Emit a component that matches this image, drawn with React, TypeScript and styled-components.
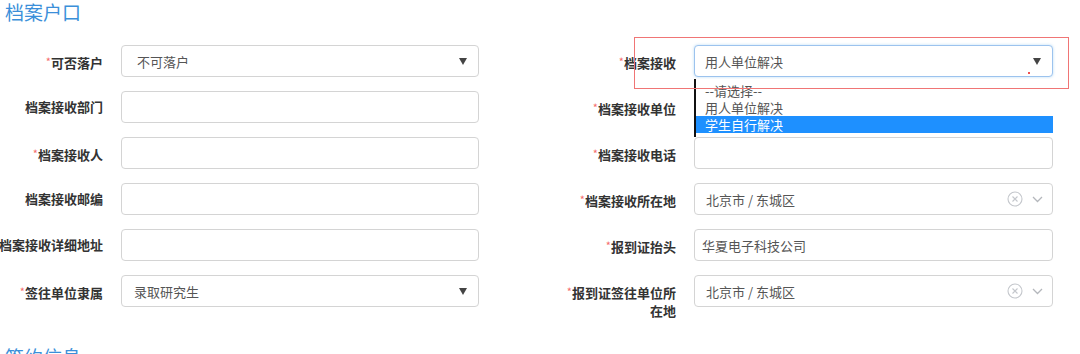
import React from "react";
import styled, { createGlobalStyle } from "styled-components";

const GlobalStyle = createGlobalStyle`
  html, body { margin: 0; padding: 0; background: #fff; overflow: hidden; }
  body { font-family: "Noto Sans CJK SC", "Noto Sans", sans-serif; }
`;

const Page = styled.div`
  width: 1080px;
  height: 354px;
  overflow: hidden;
`;

const SectionTitle = styled.div<{ $top?: number }>`
  font-size: 19px;
  line-height: 24px;
  height: 24px;
  color: #3b8fd9;
  padding-left: 5px;
  margin-top: ${(p) => p.$top ?? 0}px;
`;

const FormGrid = styled.div`
  display: grid;
  grid-template-columns: 487px 488px;
  column-gap: 86px;
  row-gap: 14px;
  margin-left: -8px;
  margin-top: 21px;
`;

const Field = styled.div`
  position: relative;
  display: grid;
  grid-template-columns: 111px 1fr;
  column-gap: 18px;
  align-items: start;
`;

const Label = styled.label`
  font-size: 13px;
  line-height: 18px;
  padding-top: 7px;
  font-weight: 700;
  color: #333;
  text-align: right;
`;

const Star = styled.span`
  color: #f56c6c;
  font-size: 11px;
  font-weight: 400;
  vertical-align: 2px;
`;

const Control = styled.div<{ $focus?: boolean; $pad?: number }>`
  position: relative;
  box-sizing: border-box;
  height: 32px;
  border: 1px solid ${(p) => (p.$focus ? "#9cc3ee" : "#d4d4d4")};
  box-shadow: ${(p) => (p.$focus ? "0 0 3px rgba(102,175,233,0.45)" : "none")};
  border-radius: 4px;
  display: flex;
  align-items: center;
  padding: 0 11px 0 ${(p) => p.$pad ?? 10}px;
  font-size: 13px;
  color: #555;
  background: #fff;
`;

const Value = styled.span`
  flex: 1;
  white-space: nowrap;
`;

const Icons = styled.span`
  display: flex;
  align-items: center;
  gap: 9px;
  margin-right: -2px;
`;

const Dropdown = styled.ul`
  position: absolute;
  top: 33px;
  left: -1px;
  width: 357px;
  margin: 0;
  padding: 3px 0 4px;
  list-style: none;
  background: #fff;
  border-left: 2px solid #111;
  z-index: 2;
`;

const Option = styled.li<{ $active?: boolean }>`
  height: 17px;
  line-height: 17px;
  padding-left: 9px;
  font-size: 13px;
  color: ${(p) => (p.$active ? "#fff" : "#555")};
  background: ${(p) => (p.$active ? "#1e90ff" : "transparent")};
`;

const Highlight = styled.div`
  position: absolute;
  left: 69px;
  top: -8px;
  width: 435px;
  height: 52px;
  box-sizing: border-box;
  border: 1px solid #f07575;
  pointer-events: none;
  z-index: 3;
`;

const Dot = styled.span`
  position: absolute;
  right: 22px;
  bottom: 2px;
  width: 2px;
  height: 2px;
  background: #f05050;
`;

const Caret = () => (
  <svg width="8" height="7" viewBox="0 0 8 7">
    <polygon points="0,0 8,0 4,7" fill="#444" />
  </svg>
);

const ClearIcon = () => (
  <svg width="16" height="16" viewBox="0 0 16 16">
    <circle cx="8" cy="8" r="7" fill="none" stroke="#c4c7cc" strokeWidth="1.1" />
    <path d="M5.5 5.5 L10.5 10.5 M10.5 5.5 L5.5 10.5" stroke="#c4c7cc" strokeWidth="1.1" />
  </svg>
);

const Chevron = () => (
  <svg width="11" height="7" viewBox="0 0 11 7">
    <polyline points="1,1 5.5,5.5 10,1" fill="none" stroke="#b4b7bc" strokeWidth="1.3" />
  </svg>
);

type Req = { req?: boolean; children: React.ReactNode };
const FieldLabel = ({ req, children }: Req) => (
  <Label>
    {req && <Star>*</Star>}
    {children}
  </Label>
);

export default function App() {
  return (
    <Page>
      <GlobalStyle />
      <SectionTitle>档案户口</SectionTitle>
      <FormGrid>
        <Field>
          <FieldLabel req>可否落户</FieldLabel>
          <Control $pad={15}>
            <Value>不可落户</Value>
            <Caret />
          </Control>
        </Field>
        <Field>
          <FieldLabel req>档案接收</FieldLabel>
          <Control $focus>
            <Value>用人单位解决</Value>
            <Caret />
            <Dot />
            <Dropdown>
              <Option>--请选择--</Option>
              <Option>用人单位解决</Option>
              <Option $active>学生自行解决</Option>
            </Dropdown>
          </Control>
          <Highlight />
        </Field>

        <Field>
          <FieldLabel>档案接收部门</FieldLabel>
          <Control />
        </Field>
        <Field>
          <FieldLabel req>档案接收单位</FieldLabel>
          <Control />
        </Field>

        <Field>
          <FieldLabel req>档案接收人</FieldLabel>
          <Control />
        </Field>
        <Field>
          <FieldLabel req>档案接收电话</FieldLabel>
          <Control />
        </Field>

        <Field>
          <FieldLabel>档案接收邮编</FieldLabel>
          <Control />
        </Field>
        <Field>
          <FieldLabel req>档案接收所在地</FieldLabel>
          <Control $pad={11}>
            <Value>北京市 / 东城区</Value>
            <Icons>
              <ClearIcon />
              <Chevron />
            </Icons>
          </Control>
        </Field>

        <Field>
          <FieldLabel>档案接收详细地址</FieldLabel>
          <Control />
        </Field>
        <Field>
          <FieldLabel req>报到证抬头</FieldLabel>
          <Control $pad={7}>
            <Value>华夏电子科技公司</Value>
          </Control>
        </Field>

        <Field>
          <FieldLabel req>签往单位隶属</FieldLabel>
          <Control $pad={12}>
            <Value>录取研究生</Value>
            <Caret />
          </Control>
        </Field>
        <Field>
          <FieldLabel req>报到证签往单位所在地</FieldLabel>
          <Control $pad={11}>
            <Value>北京市 / 东城区</Value>
            <Icons>
              <ClearIcon />
              <Chevron />
            </Icons>
          </Control>
        </Field>
      </FormGrid>
      <SectionTitle $top={25}>签约信息</SectionTitle>
    </Page>
  );
}
